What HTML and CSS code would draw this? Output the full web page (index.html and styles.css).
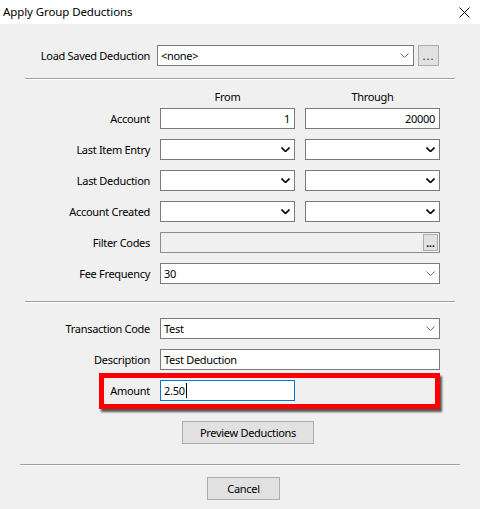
FILE: index.html
```html
<!DOCTYPE html>
<html lang="en">

<head>
    <meta charset="UTF-8">
    <title>Apply Group Deductions</title>
    <link rel="stylesheet" href="styles.css">
</head>

<body>
    <!-- Title bar -->
    <div class="titlebar">
        <span class="title">Apply Group Deductions</span>
        <svg class="close" width="11" height="11" viewBox="0 0 11 11">
            <path d="M0.5 0.5 L10.5 10.5 M10.5 0.5 L0.5 10.5" stroke="#000" stroke-width="1" />
        </svg>
    </div>

    <div class="dialog">
        <!-- Saved deduction -->
        <div class="load-row">
            <label class="lbl">Load Saved Deduction</label>
            <div class="field combo load-combo">
                <span class="val">&lt;none&gt;</span>
                <svg class="chev light" width="9" height="5" viewBox="0 0 9 5"><path d="M0.5 0.5 L4.5 4.5 L8.5 0.5" fill="none" /></svg>
            </div>
            <button class="btn dots-btn">...</button>
        </div>

        <div class="sep sep-top"></div>

        <div class="col-heads">
            <span>From</span>
            <span>Through</span>
        </div>

        <div class="grid">
            <label class="lbl">Account</label>
            <div class="field num">1</div>
            <div class="field num">20000</div>

            <label class="lbl">Last Item Entry</label>
            <div class="field combo"><span class="val"></span><svg class="chev dark" width="9" height="5" viewBox="0 0 9 5"><path d="M0.5 0.5 L4.5 4.5 L8.5 0.5" fill="none" /></svg></div>
            <div class="field combo"><span class="val"></span><svg class="chev dark" width="9" height="5" viewBox="0 0 9 5"><path d="M0.5 0.5 L4.5 4.5 L8.5 0.5" fill="none" /></svg></div>

            <label class="lbl">Last Deduction</label>
            <div class="field combo"><span class="val"></span><svg class="chev dark" width="9" height="5" viewBox="0 0 9 5"><path d="M0.5 0.5 L4.5 4.5 L8.5 0.5" fill="none" /></svg></div>
            <div class="field combo"><span class="val"></span><svg class="chev dark" width="9" height="5" viewBox="0 0 9 5"><path d="M0.5 0.5 L4.5 4.5 L8.5 0.5" fill="none" /></svg></div>

            <label class="lbl">Account Created</label>
            <div class="field combo"><span class="val"></span><svg class="chev dark" width="9" height="5" viewBox="0 0 9 5"><path d="M0.5 0.5 L4.5 4.5 L8.5 0.5" fill="none" /></svg></div>
            <div class="field combo"><span class="val"></span><svg class="chev dark" width="9" height="5" viewBox="0 0 9 5"><path d="M0.5 0.5 L4.5 4.5 L8.5 0.5" fill="none" /></svg></div>

            <label class="lbl">Filter Codes</label>
            <div class="field wide disabled">
                <button class="btn mini-btn">...</button>
            </div>

            <label class="lbl">Fee Frequency</label>
            <div class="field combo wide"><span class="val">30</span><svg class="chev light" width="9" height="5" viewBox="0 0 9 5"><path d="M0.5 0.5 L4.5 4.5 L8.5 0.5" fill="none" /></svg></div>
        </div>

        <div class="sep sep-mid"></div>

        <div class="grid grid-tx">
            <label class="lbl">Transaction Code</label>
            <div class="field combo wide"><span class="val">Test</span><svg class="chev light" width="9" height="5" viewBox="0 0 9 5"><path d="M0.5 0.5 L4.5 4.5 L8.5 0.5" fill="none" /></svg></div>

            <label class="lbl">Description</label>
            <div class="field wide">Test Deduction</div>

            <div class="amount-row">
                <label class="lbl">Amount</label>
                <div class="field focused">2.50<span class="caret"></span></div>
            </div>
        </div>

        <div class="actions preview">
            <button class="btn push preview-btn">Preview Deductions</button>
        </div>

        <div class="sep sep-bottom"></div>

        <div class="actions cancel">
            <button class="btn push cancel-btn">Cancel</button>
        </div>
    </div>
</body>

</html>
```

FILE: styles.css
```css
body {
    margin: 0;
    padding: 0;
    width: 480px;
    height: 509px;
    overflow: hidden;
    background-color: #f0f0f0;
    font-family: "Noto Sans", sans-serif;
    font-size: 11px;
    letter-spacing: -0.3px;
    color: #000;
}

.titlebar {
    height: 24px;
    background: #fff;
    display: flex;
    align-items: center;
    justify-content: space-between;
    padding: 0 10px 0 3px;
}

.title {
    font-size: 11.5px;
    letter-spacing: -0.1px;
    line-height: 24px;
}

.close {
    display: block;
    margin-top: 1px;
}

.dialog {
    padding-top: 21px;
}

.lbl {
    text-align: right;
    line-height: 21px;
    white-space: nowrap;
}

/* Inputs and combo boxes */
.field {
    box-sizing: border-box;
    height: 21px;
    background: #fff;
    border: 1px solid #7a7a7a;
    padding: 0 3px;
    line-height: 19px;
    white-space: nowrap;
    overflow: hidden;
}

.field.num {
    text-align: right;
    padding-right: 4px;
}

.combo {
    display: flex;
    align-items: center;
    justify-content: space-between;
    padding-right: 4px;
}

.chev {
    display: block;
    flex-shrink: 0;
}

.chev.dark path {
    stroke: #000;
    stroke-width: 1.6;
}

.chev.light path {
    stroke: #6d6d6d;
    stroke-width: 1;
}

.wide {
    grid-column: span 2;
}

.disabled {
    background: #f0f0f0;
    border-color: #8c8c8c;
    display: flex;
    justify-content: flex-end;
    align-items: center;
    padding-right: 1px;
}

.focused {
    border-color: #0078d7;
    position: relative;
}

.caret {
    display: inline-block;
    width: 1px;
    height: 15px;
    background: #000;
    vertical-align: -3px;
    margin-left: 1px;
}

/* Buttons */
.btn {
    box-sizing: border-box;
    background: #e1e1e1;
    border: 1px solid #adadad;
    font-family: inherit;
    font-size: 11px;
    letter-spacing: -0.3px;
    color: #000;
    padding: 0;
    margin: 0;
}

.dots-btn {
    width: 21px;
    height: 21px;
    margin-left: 4px;
    line-height: 17px;
    letter-spacing: 1px;
    color: #1a1a60;
}

.mini-btn {
    width: 15px;
    height: 17px;
    font-size: 10px;
    line-height: 10px;
    letter-spacing: 0;
    font-weight: bold;
}

.push {
    height: 23px;
    line-height: 21px;
}

.preview-btn {
    width: 132px;
}

.cancel-btn {
    width: 73px;
}

/* Rows */
.load-row {
    display: flex;
    align-items: center;
}

.load-row .lbl {
    width: 150px;
    margin-right: 7px;
}

.load-combo {
    width: 257px;
}

.sep {
    height: 1px;
    background: #a0a0a0;
    border-bottom: 1px solid #fff;
}

.sep-top {
    margin: 12px 25px 0 25px;
}

.sep-mid {
    margin: 17px 25px 0 25px;
}

.sep-bottom {
    margin: 20px 20px 0 20px;
}

.col-heads {
    display: flex;
    gap: 10px;
    padding-left: 160px;
    height: 18px;
    line-height: 18px;
    margin: 8px 0 2px 0;
}

.col-heads span {
    width: 135px;
    text-align: center;
}

.grid {
    display: grid;
    grid-template-columns: 150px 135px 135px;
    grid-auto-rows: 21px;
    column-gap: 10px;
    row-gap: 10px;
}

.grid-tx {
    margin-top: 15px;
}

.amount-row {
    grid-column: 1 / -1;
    display: grid;
    grid-template-columns: 150px 135px;
    column-gap: 10px;
    position: relative;
}

/* red highlight drawn over the amount row */
.amount-row::after {
    content: "";
    position: absolute;
    left: 99px;
    top: -7px;
    width: 341px;
    height: 36px;
    box-sizing: border-box;
    border: 5px solid #ff0000;
    box-shadow: 2px 3px 2px rgba(0, 0, 0, 0.65);
    pointer-events: none;
}

.actions {
    display: flex;
    justify-content: center;
}

.actions.preview {
    margin-top: 20px;
    padding-left: 16px;
}

.actions.cancel {
    margin-top: 11px;
    padding-left: 7px;
}
```
